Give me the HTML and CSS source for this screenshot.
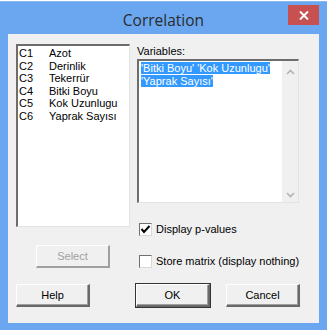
FILE: index.html
```html
<!DOCTYPE html>
<html lang="en">
<head>
  <meta charset="UTF-8" />
  <title>Correlation</title>
  <link rel="stylesheet" href="styles.css">
</head>
<body>
  <div class="window">
    <div class="titlebar">
      <span class="title">Correlation</span>
      <div class="close">
        <svg width="10" height="9" viewBox="0 0 10 9"><path d="M1 0.5 L9 8.5 M9 0.5 L1 8.5" stroke="#fff" stroke-width="2"/></svg>
      </div>
    </div>
    <div class="client">
      <div class="main">
        <div class="left">
          <div class="listbox">
            <div class="row"><span class="col">C1</span>Azot</div>
            <div class="row"><span class="col">C2</span>Derinlik</div>
            <div class="row"><span class="col">C3</span>Tekerrür</div>
            <div class="row"><span class="col">C4</span>Bitki Boyu</div>
            <div class="row"><span class="col">C5</span>Kok Uzunlugu</div>
            <div class="row"><span class="col">C6</span>Yaprak Sayısı</div>
          </div>
          <button class="btn select" disabled>Select</button>
        </div>
        <div class="right">
          <div class="caption">Variables:</div>
          <div class="varbox">
            <div class="vartext">
              <span class="sel">'Bitki Boyu' 'Kok Uzunlugu' </span><br>
              <span class="sel">'Yaprak Sayısı'</span>
            </div>
            <div class="scroll">
              <svg width="9" height="6" viewBox="0 0 9 6"><path d="M1 5 L4.5 1.5 L8 5" fill="none" stroke="#b4b4b4" stroke-width="1.6"/></svg>
              <svg width="9" height="6" viewBox="0 0 9 6"><path d="M1 1 L4.5 4.5 L8 1" fill="none" stroke="#b4b4b4" stroke-width="1.6"/></svg>
            </div>
          </div>
          <label class="check first">
            <span class="box">
              <svg width="11" height="11" viewBox="0 0 11 11"><path d="M1.5 5 L4 8 L9.5 2" fill="none" stroke="#000" stroke-width="2"/></svg>
            </span>
            Display p-values
          </label>
          <label class="check">
            <span class="box"></span>
            Store matrix (display nothing)
          </label>
        </div>
      </div>
      <div class="buttons">
        <button class="btn">Help</button>
        <div class="spacer"></div>
        <button class="btn default">OK</button>
        <button class="btn cancel">Cancel</button>
      </div>
    </div>
  </div>
</body>
</html>
```
FILE: styles.css
```css
html, body { margin: 0; padding: 0; }
body { width: 327px; height: 330px; background: #fff; font-family: "Liberation Sans", Arial, sans-serif; font-size: 11px; color: #000; overflow: hidden; }
.window { box-sizing: border-box; width: 327px; height: 330px; margin-top: 1px; background: #6aa7f0; border-top: 1px solid #8ab8f2; padding: 0 8px 8px 8px; display: flex; flex-direction: column; }
.titlebar { height: 32px; flex: none; position: relative; display: flex; align-items: center; justify-content: center; }
.title { font-family: "Open Sans", "Noto Sans", sans-serif; font-size: 15.5px; color: #2b2b2b; margin-top: 4px; }
.close { position: absolute; right: 0; top: 3px; width: 31px; height: 20px; background: #c75050; display: flex; align-items: center; justify-content: center; }
.client { flex: 1; background: #f0f0f0; padding: 10px 18px 0 8px; display: flex; flex-direction: column; }
.main { display: flex; gap: 7px; }
.left { width: 114px; display: flex; flex-direction: column; align-items: center; }
.listbox { box-sizing: border-box; width: 114px; height: 183px; background: #fff; border-style: solid; border-width: 2px 1px 1px 2px; border-color: #6d6d6d #e3e3e3 #e3e3e3 #6d6d6d; padding: 1px 0 0 1px; }
.row { height: 12.5px; line-height: 12px; white-space: nowrap; }
.col { display: inline-block; width: 30px; }
.btn { box-sizing: border-box; width: 74px; height: 23px; background: #f0f0f0; font-family: "Liberation Sans", Arial, sans-serif; font-size: 11px; color: #000; border-style: solid; border-width: 1px 2px 2px 1px; border-color: #ffffff #696969 #696969 #ffffff; padding: 0; box-shadow: inset -1px -1px #a0a0a0; }
.select { margin-top: 18px; color: #a0a0a0; border-color: #ffffff #a0a0a0 #a0a0a0 #ffffff; box-shadow: none; }
.right { width: 162px; display: flex; flex-direction: column; }
.caption { height: 15px; line-height: 14px; }
.varbox { box-sizing: border-box; height: 144px; background: #fff; border-style: solid; border-width: 2px 1px 1px 2px; border-color: #6d6d6d #e3e3e3 #e3e3e3 #6d6d6d; display: flex; }
.vartext { flex: 1; padding: 1px 0 0 2px; line-height: 13px; }
.sel { background: #3399ff; color: #fff; }
.scroll { width: 16px; background: #f0f0f0; display: flex; flex-direction: column; justify-content: space-between; align-items: center; padding: 8px 0 4px; }
.check { display: flex; align-items: center; gap: 4px; height: 14px; margin-top: 18px; white-space: nowrap; }
.check.first { margin-top: 19px; }
.box { box-sizing: border-box; width: 13px; height: 13px; margin-left: 2px; background: #fff; border-style: solid; border-width: 1px; border-color: #707070 #d8d8d8 #d8d8d8 #707070; display: flex; align-items: center; justify-content: center; flex: none; }
.buttons { display: flex; margin-top: 16px; }
.spacer { width: 46px; }
.default { outline: 1px solid #333; }
.cancel { margin-left: 16px; }
```
